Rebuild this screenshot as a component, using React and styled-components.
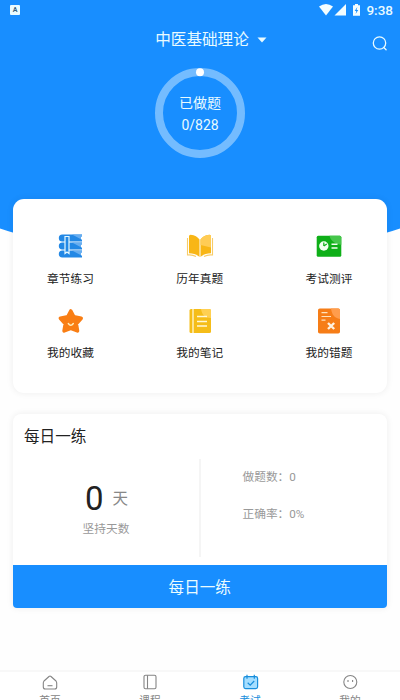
import React from 'react';
import styled, { createGlobalStyle } from 'styled-components';

const GlobalStyle = createGlobalStyle`
  * { box-sizing: border-box; }
  body {
    margin: 0;
    background: #fff;
    font-family: Roboto, "Noto Sans CJK SC", sans-serif;
    color: #222;
  }
`;

const Screen = styled.main`
  width: 400px;
  height: 700px;
  overflow: hidden;
  display: flex;
  flex-direction: column;
  background: #fefefe;
`;

const Hero = styled.header`
  height: 262px;
  flex: none;
  background: #188eff;
  color: #e9fbff;
  clip-path: circle(630px at 50% -369px);
`;

const StatusBar = styled.div`
  height: 20px;
  padding: 0 7px 0 10px;
  display: flex;
  align-items: center;
  justify-content: space-between;
`;

const StatusIcons = styled.div`
  display: flex;
  align-items: center;
`;

const Clock = styled.span`
  margin-left: 3px;
  font-size: 13.5px;
  line-height: 20px;
  font-weight: 500;
`;

const TitleBar = styled.div`
  height: 38px;
  padding: 1px 12px 0;
  display: grid;
  grid-template-columns: 1fr auto 1fr;
  align-items: center;
`;

const Title = styled.h1`
  grid-column: 2;
  margin: 0;
  padding-left: 22px;
  display: flex;
  align-items: center;
  gap: 8px;
  font-size: 15.6px;
  line-height: 22px;
  font-weight: 400;
`;

const SearchButton = styled.button`
  justify-self: end;
  margin-top: 8px;
  padding: 0;
  border: 0;
  background: none;
  color: inherit;
  svg { display: block; }
`;

const Ring = styled.div`
  width: 90px;
  height: 90px;
  margin: 10px auto 0;
  display: grid;
  place-items: center;
  > * { grid-area: 1 / 1; }
`;

const RingText = styled.div`
  padding-top: 2px;
  text-align: center;
  font-size: 14px;
  line-height: 22px;
`;

const Panel = styled.section`
  flex: none;
  position: relative;
  margin: ${(p) => p.$margin};
  height: ${(p) => p.$height};
  border-radius: ${(p) => p.$radius};
  background: #fff;
  box-shadow: 0 0 6px 1px rgba(0, 0, 0, 0.055);
`;

const Menu = styled.nav`
  padding: 33px 0 0;
  display: grid;
  grid-template-columns: 115px 1fr 115px;
  grid-auto-rows: 74.5px;
`;

const MenuItem = styled.a`
  display: flex;
  flex-direction: column;
  align-items: center;
  gap: 9.5px;
  font-size: 11.7px;
  line-height: 18px;
  svg { display: block; }
`;

const PanelTitle = styled.h2`
  margin: 0;
  padding: 12px 11px 0;
  height: 45px;
  font-size: 15.6px;
  line-height: 22px;
  font-weight: 400;
`;

const Stats = styled.div`
  height: 98px;
  display: grid;
  grid-template-columns: 188px 1fr;
`;

const Streak = styled.div`
  padding-top: 21px;
  border-right: 2px solid #f5f5f5;
  text-align: center;
`;

const Days = styled.div`
  padding-left: 1px;
  display: flex;
  justify-content: center;
  align-items: center;
  gap: 9px;
  color: #888;
  font-size: 15.5px;
  line-height: 38px;
`;

const Count = styled.span`
  color: #222;
  font-size: 33px;
`;

const Caption = styled.div`
  color: #999;
  font-size: 11.7px;
  line-height: 22px;
`;

const Results = styled.div`
  padding: 7px 0 0 41.5px;
  display: flex;
  flex-direction: column;
  gap: 15px;
`;

const DailyButton = styled.button`
  width: 100%;
  height: 43px;
  margin-top: 8px;
  padding: 3px 0 0;
  border: 0;
  border-radius: 0 0 4px 4px;
  background: #188eff;
  color: #e9fbff;
  font: 15.6px/40px Roboto, "Noto Sans CJK SC", sans-serif;
`;

const TabBar = styled.nav`
  height: 46px;
  flex: none;
  margin-top: 62px;
  border-top: 2px solid #f8f8f8;
  background: #fff;
  display: grid;
  grid-template-columns: repeat(4, 1fr);
`;

const Tab = styled.a`
  padding-top: 1px;
  display: flex;
  flex-direction: column;
  align-items: center;
  gap: 2px;
  color: ${(p) => (p.$active ? '#188edc' : '#858585')};
  font-size: 10.7px;
  line-height: 16px;
  svg { display: block; }
`;

const BooksIcon = () => (
  <svg width="28" height="28" viewBox="0 0 28 28">
    {[2.5, 10.5, 18.5].map((y) => (
      <g key={y}>
        <path d={`M25 ${y}H5.300a3.300 3.300 0 0 0 0 7H25v-1.800l-1-.5v-2.400l1-.5z`} fill="#2388e5" />
        <path d={`M15 ${y}h10v1.800l-1 .5v2.400z`} fill="#67adf0" />
      </g>
    ))}
    <path d="M8 4.500h4v17l-2-1.500-2 1.500z" fill="#2388e5" stroke="#e4f8ff" strokeWidth="1.200" />
  </svg>
);

const OpenBookIcon = () => (
  <svg width="28" height="28" viewBox="0 0 28 28">
    <path d="M1.500 6v17q5-.5 8.500 1.500M26.500 6v17q-5-.5-8.500 1.500" fill="none" stroke="#f8cc68" strokeWidth="1.100" />
    <path d="M4.500 2.800c4.500.5 7 2 9 4.700v17.500c-2.500-2.500-6-3.500-10.500-3.700V4.300q0-1.500 1.500-1.500z" fill="#f8b616" />
    <path d="M23.500 2.800c-4.500.5-7 2-9 4.700v17.500c2.500-2.500 6-3.500 10.500-3.700V4.300q0-1.500-1.500-1.500z" fill="#f8b616" />
    <path d="M23.500 2.800c-4.500.5-7 2-9 4.700v5.500L25 15.500V4.300q0-1.500-1.500-1.500z" fill="#ffcc55" />
  </svg>
);

const ReportIcon = () => (
  <svg width="28" height="28" viewBox="0 0 28 28">
    <rect x="1.700" y="3.700" width="24.600" height="21" rx="1.500" fill="#0eaf18" />
    <path d="M14.500 3.700h10.300a1.500 1.500 0 0 1 1.500 1.500v7.500C20.500 12 15.500 9 14.500 3.700z" fill="#45c64b" />
    <circle cx="8.800" cy="14" r="4.700" fill="#f1fff0" />
    <path d="M8.800 14V10.500M8.800 14l3-2" stroke="#0eaf18" strokeWidth="1.200" />
    <path d="M16.500 12.300h6M16.500 16h6" stroke="#f1fff0" strokeWidth="1.500" />
  </svg>
);

const StarIcon = () => (
  <svg width="28" height="28" viewBox="0 0 28 28">
    <path d="M13.800 4l3 5.800 7.400 1.400-4.900 5.500 1.200 7.200-6.700-2.600-6.700 2.600 1.200-7.200-4.900-5.500 7.400-1.400z" fill="#f97e14" stroke="#f97e14" strokeWidth="3.600" strokeLinejoin="round" />
    <path d="M11.300 16.500q2.500 3.600 5 0" fill="none" stroke="#fff0bd" strokeWidth="1.400" strokeLinecap="round" />
  </svg>
);

const NotebookIcon = () => (
  <svg width="28" height="28" viewBox="0 0 28 28">
    <rect x="3.500" y="2" width="21.500" height="24" rx="1.500" fill="#f5bd19" />
    <path d="M15 2h8.500A1.500 1.500 0 0 1 25 3.500V11c-6 0-9-3-10-9z" fill="#ffd052" />
    <path d="M7 2v24" stroke="#fff8d7" strokeWidth="1.300" />
    <path d="M11 9.500h10M11 14.500h10M11 19h10" stroke="#fff8d7" strokeWidth="1.600" />
  </svg>
);

const MistakesIcon = () => (
  <svg width="28" height="28" viewBox="0 0 28 28">
    <rect x="3" y="1.500" width="22" height="25" rx="1.800" fill="#f67d17" />
    <path d="M16 1.500h7.500A1.500 1.500 0 0 1 25 3v9C19.500 11 17 8 16 1.500z" fill="#ff9d4d" />
    <path d="M6.500 5.700h6M6.500 9.500h9.500M6.500 13.200h4" stroke="#ffe2bd" strokeWidth="1.200" />
    <path d="M13 16l6.200 6M19.200 16L13 22" stroke="#fff1df" strokeWidth="2.400" />
  </svg>
);

const HomeIcon = () => (
  <svg width="18" height="18" viewBox="0 0 18 18" fill="none" stroke="currentColor" strokeWidth="1.100" strokeLinejoin="round">
    <path d="M3 8L8 3.500q1-.9 2 0L15 8q.7 1 .7 2v4q0 2-2 2H4.300q-2 0-2-2v-4q0-1 .7-2z" />
    <path d="M6.500 12.700h5" />
  </svg>
);

const CourseIcon = () => (
  <svg width="18" height="18" viewBox="0 0 18 18" fill="none" stroke="currentColor" strokeWidth="1.100">
    <rect x="3" y="2.300" width="12" height="13.500" rx="1.500" />
    <path d="M6.500 2.300v13.500" />
  </svg>
);

const ExamIcon = () => (
  <svg width="18" height="18" viewBox="0 0 18 18" fill="none" stroke="currentColor" strokeWidth="1.200">
    <rect x="2.800" y="3.600" width="13.800" height="12" rx="1.800" fill="#a5deff" />
    <path d="M6 1.800v4M13.300 1.800v4M6.700 9.800l2.500 2.400 4-4.200" />
  </svg>
);

const ProfileIcon = () => (
  <svg width="18" height="18" viewBox="0 0 18 18" fill="none" stroke="currentColor" strokeWidth="1.100">
    <circle cx="9.300" cy="9" r="6.500" />
    <path d="M7 7v2M11.600 7v2" />
  </svg>
);

const menuItems = [
  { label: '章节练习', Icon: BooksIcon },
  { label: '历年真题', Icon: OpenBookIcon },
  { label: '考试测评', Icon: ReportIcon },
  { label: '我的收藏', Icon: StarIcon },
  { label: '我的笔记', Icon: NotebookIcon },
  { label: '我的错题', Icon: MistakesIcon },
];

const tabs = [
  { label: '首页', Icon: HomeIcon },
  { label: '课程', Icon: CourseIcon },
  { label: '考试', Icon: ExamIcon, active: true },
  { label: '我的', Icon: ProfileIcon },
];

const InputBadge = styled.span`
  width: 10px;
  height: 10px;
  border-radius: 1px;
  background: #e9fbff;
  color: #35617c;
  font-size: 7px;
  line-height: 10px;
  font-weight: 700;
  text-align: center;
`;

export default function App() {
  return (
    <Screen>
      <GlobalStyle />
      <Hero>
        <StatusBar>
          <InputBadge>A</InputBadge>
          <StatusIcons>
            <svg width="44" height="14" viewBox="0 0 44 14" fill="#f3fdff">
              <path d="M0 3.500Q7-1.500 14 3.500L7 12.500z" />
              <path d="M27 1v11.500H15.500z" />
              <path d="M36 1h3v1.200h2v10.500h-7V2.200h2z" />
              <path d="M38.300 4L35.700 8h1.600l-.7 3 2.700-4h-1.700z" fill="#188eff" />
            </svg>
            <Clock>9:38</Clock>
          </StatusIcons>
        </StatusBar>
        <TitleBar>
          <Title>
            中医基础理论
            <svg width="10" height="6" viewBox="0 0 10 6" fill="currentColor"><path d="M.5.500h9L5 5.500z" /></svg>
          </Title>
          <SearchButton aria-label="搜索">
            <svg width="16" height="16" viewBox="0 0 16 16" fill="none" stroke="currentColor" strokeWidth="1.300" strokeLinecap="round">
              <circle cx="7.500" cy="7" r="6.200" />
              <path d="M11.800 11.500l2.300 2.300" />
            </svg>
          </SearchButton>
        </TitleBar>
        <Ring>
          <svg width="90" height="90" viewBox="0 0 90 90">
            <circle cx="45" cy="45" r="41" fill="none" stroke="#74bcff" strokeWidth="8" />
            <circle cx="45" cy="4.200" r="4" fill="#fff" />
          </svg>
          <RingText>
            <div>已做题</div>
            <div>0/828</div>
          </RingText>
        </Ring>
      </Hero>
      <Panel $margin="-63px 13.500px 0 13px" $height="194px" $radius="11px">
        <Menu>
          {menuItems.map(({ label, Icon }) => (
            <MenuItem key={label}><Icon />{label}</MenuItem>
          ))}
        </Menu>
      </Panel>
      <Panel $margin="21px 13.500px 0 13px" $height="194px" $radius="8px 8px 4px 4px">
        <PanelTitle>每日一练</PanelTitle>
        <Stats>
          <Streak>
            <Days><Count>0</Count>天</Days>
            <Caption>坚持天数</Caption>
          </Streak>
          <Results>
            <Caption>做题数：0</Caption>
            <Caption>正确率：0%</Caption>
          </Results>
        </Stats>
        <DailyButton>每日一练</DailyButton>
      </Panel>
      <TabBar>
        {tabs.map(({ label, Icon, active }) => (
          <Tab key={label} $active={active}><Icon />{label}</Tab>
        ))}
      </TabBar>
    </Screen>
  );
}
